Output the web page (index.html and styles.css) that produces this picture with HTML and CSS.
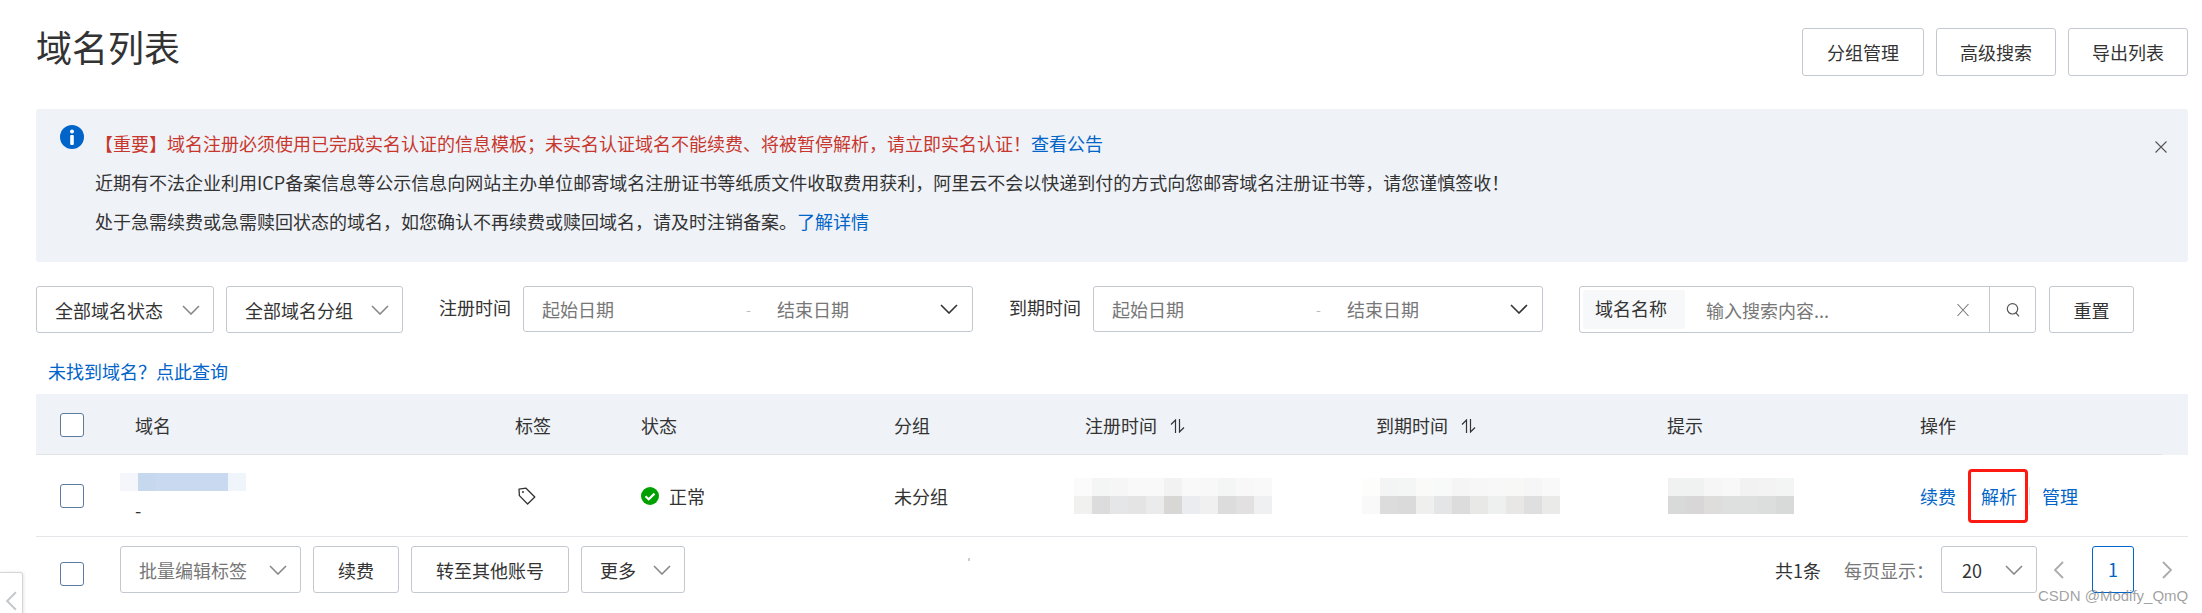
FILE: index.html
```html
<!DOCTYPE html>
<html lang="zh-CN">
<head>
<meta charset="utf-8">
<title>域名列表</title>
<link rel="stylesheet" href="styles.css">
</head>
<body>
<svg class="sprite" aria-hidden="true">
  <symbol id="chev" viewBox="0 0 18 10"><path d="M1 1l8 8 8-8" fill="none" stroke="currentColor" stroke-width="1.6"/></symbol>
  <symbol id="pageleft" viewBox="0 0 10 18"><path d="M9 1L1 9l8 8" fill="none" stroke="currentColor" stroke-width="1.8"/></symbol>
  <symbol id="pageright" viewBox="0 0 10 18"><path d="M1 1l8 8-8 8" fill="none" stroke="currentColor" stroke-width="1.8"/></symbol>
  <symbol id="sort" viewBox="0 0 15 14"><path d="M5.5 14V1L1 5.5M9.5 0v13L14 8.5" fill="none" stroke="currentColor" stroke-width="1.2"/></symbol>
</svg>
<div class="page">
  <header class="top">
    <h1 class="title">域名列表</h1>
    <div class="actions">
      <button class="btn btn-a">分组管理</button>
      <button class="btn btn-b">高级搜索</button>
      <button class="btn btn-c">导出列表</button>
    </div>
  </header>

  <section class="alert">
    <svg class="alert-icon" viewBox="0 0 24 24"><circle cx="12" cy="12" r="12" fill="#0064c8"/><circle cx="12" cy="6.6" r="2" fill="#fff"/><rect x="10.2" y="10" width="3.6" height="10" rx="1" fill="#fff"/></svg>
    <div class="alert-body">
      <p class="warn">【重要】域名注册必须使用已完成实名认证的信息模板；未实名认证域名不能续费、将被暂停解析，请立即实名认证！<a class="link">查看公告</a></p>
      <p>近期有不法企业利用ICP备案信息等公示信息向网站主办单位邮寄域名注册证书等纸质文件收取费用获利，阿里云不会以快递到付的方式向您邮寄域名注册证书等，请您谨慎签收！</p>
      <p>处于急需续费或急需赎回状态的域名，如您确认不再续费或赎回域名，请及时注销备案。<a class="link">了解详情</a></p>
    </div>
    <svg class="alert-close" viewBox="0 0 14 14"><path d="M1.5 1.5l11 11M12.5 1.5l-11 11" stroke="#555" stroke-width="1.1" fill="none"/></svg>
  </section>

  <section class="filters">
    <div class="select sel-status"><span>全部域名状态</span><svg class="chev"><use href="#chev"/></svg></div>
    <div class="select sel-group"><span>全部域名分组</span><svg class="chev"><use href="#chev"/></svg></div>
    <label class="flabel flabel-reg">注册时间</label>
    <div class="range">
      <span class="ph ph-start">起始日期</span><span class="dash">-</span><span class="ph">结束日期</span>
      <svg class="chev chev-dark"><use href="#chev"/></svg>
    </div>
    <label class="flabel flabel-exp">到期时间</label>
    <div class="range">
      <span class="ph ph-start">起始日期</span><span class="dash">-</span><span class="ph">结束日期</span>
      <svg class="chev chev-dark"><use href="#chev"/></svg>
    </div>
    <div class="search">
      <span class="search-prefix">域名名称</span>
      <span class="ph search-input">输入搜索内容...</span>
      <svg class="search-clear" viewBox="0 0 14 14"><path d="M1.5 1l11 12M12.5 1l-11 12" stroke="#777" stroke-width="1.1" fill="none"/></svg>
      <span class="search-btn"><svg viewBox="0 0 14 16" class="search-glass"><circle cx="6.5" cy="6.8" r="5.2" fill="none" stroke="#555" stroke-width="1.2"/><path d="M10 10.8l3 3.6" stroke="#555" stroke-width="1.2"/></svg></span>
    </div>
    <button class="btn btn-reset">重置</button>
  </section>

  <a class="link find">未找到域名？点此查询</a>

  <div class="trow thead">
    <span class="check"></span>
    <span class="pad">域名</span>
    <span>标签</span>
    <span>状态</span>
    <span>分组</span>
    <span class="sortable">注册时间<svg class="sort"><use href="#sort"/></svg></span>
    <span class="sortable">到期时间<svg class="sort"><use href="#sort"/></svg></span>
    <span>提示</span>
    <span>操作</span>
  </div>

  <div class="trow tbody">
    <span class="check"></span>
    <div class="name-cell">
      <span class="mosaic-name"></span>
      <span class="pad minus">-</span>
    </div>
    <svg class="tag" viewBox="0 0 18 18"><path d="M1 2.2L8 1.2 16.8 10 9.6 17 1.4 8.6z" fill="none" stroke="#333" stroke-width="1.3" stroke-linejoin="round"/><circle cx="5" cy="5" r="1" fill="#333"/></svg>
    <span class="status"><svg class="ok" viewBox="0 0 18 18"><circle cx="9" cy="9" r="9" fill="#00a000"/><path d="M4.5 9.2l3.2 3 5.8-5.6" fill="none" stroke="#fff" stroke-width="2.2"/></svg>正常</span>
    <span>未分组</span>
    <span class="mosaic mosaic-reg"></span>
    <span class="mosaic mosaic-exp"></span>
    <span class="mosaic mosaic-tip"></span>
    <span class="ops"><a class="link">续费</a><a class="link marked">解析</a><a class="link">管理</a></span>
  </div>

  <footer class="tfoot">
    <span class="check"></span>
    <div class="select sel-batch"><span>批量编辑标签</span><svg class="chev"><use href="#chev"/></svg></div>
    <button class="btn btn-renew">续费</button>
    <button class="btn btn-transfer">转至其他账号</button>
    <div class="select sel-more"><span>更多</span><svg class="chev"><use href="#chev"/></svg></div>
    <div class="pager">
      <span class="total">共1条</span>
      <span class="per">每页显示：</span>
      <div class="select sel-size"><span>20</span><svg class="chev"><use href="#chev"/></svg></div>
      <svg class="page-arrow"><use href="#pageleft"/></svg>
      <span class="page-cur">1</span>
      <svg class="page-arrow"><use href="#pageright"/></svg>
    </div>
  </footer>
</div>
<span class="speck"></span>
<div class="side-tab"><svg class="page-arrow"><use href="#pageleft"/></svg></div>
<div class="watermark">CSDN @Modify_QmQ</div>
</body>
</html>
```

FILE: styles.css
```css
* { box-sizing: border-box; }
html, body { margin: 0; padding: 0; background: #fff; }
body {
  position: relative;
  width: 2202px;
  height: 613px;
  overflow: hidden;
  font: 400 18px/24px "Noto Sans CJK SC", "Liberation Sans", sans-serif;
  color: #333;
}
.sprite { position: absolute; width: 0; height: 0; }
.page { padding: 22px 14px 0 36px; }
.link { color: #0064c8; text-decoration: none; }

.top { display: flex; justify-content: space-between; align-items: flex-start; height: 87px; }
.title { margin: 0; font-size: 36px; line-height: 48px; font-weight: 400; color: #333; }
.actions { display: flex; gap: 12px; margin-top: 6px; }
.btn {
  height: 48px;
  padding: 0;
  border: 1px solid #c4c8d0;
  border-radius: 3px;
  background: #fff;
  font: inherit;
  color: #333;
}
.btn-a { width: 122px; }
.btn-b { width: 120px; }
.btn-c { width: 120px; }

.alert {
  display: flex;
  height: 153px;
  background: #eff2f7;
  border-radius: 3px;
}
.alert-icon { width: 24px; height: 24px; margin: 16px 11px 0 24px; flex: none; }
.alert-body { flex: 1; padding-top: 15px; }
.alert-body p { margin: 0; line-height: 39px; height: 39px; white-space: nowrap; }
.warn { color: #c8372d; }
.alert-close { width: 14px; height: 14px; margin: 31px 20px 0 0; flex: none; }

.filters { display: flex; align-items: flex-start; margin-top: 24px; height: 47px; }
.select {
  display: flex;
  align-items: center;
  justify-content: space-between;
  height: 47px;
  border: 1px solid #c4c8d0;
  border-radius: 3px;
  background: #fff;
  padding: 0 13px 0 18px;
}
.chev { width: 18px; height: 10px; color: #888; flex: none; }
.chev-dark { color: #333; }
.sel-status { width: 178px; }
.sel-group { width: 177px; margin-left: 12px; }
.flabel { line-height: 42px; }
.flabel-reg { margin: 0 12px 0 36px; }
.flabel-exp { margin: 0 12px 0 36px; }
.range {
  display: flex;
  align-items: center;
  width: 450px;
  height: 46px;
  padding: 0 14px 0 18px;
  border: 1px solid #c4c8d0;
  border-radius: 3px;
}
.ph { color: #777; }
.ph-start { width: 204px; }
.dash { width: 31px; color: #bbb; font-size: 14px; }
.range .chev { margin-left: auto; }
.search {
  display: flex;
  align-items: center;
  width: 457px;
  height: 47px;
  margin-left: 36px;
  padding-left: 3px;
  border: 1px solid #c4c8d0;
  border-radius: 3px;
}
.search-prefix {
  width: 102px;
  height: 39px;
  line-height: 37px;
  padding-left: 12px;
  background: #f7f8fa;
  border-radius: 3px;
  flex: none;
}
.search-input { margin-left: 21px; flex: 1; }
.search-clear { width: 14px; height: 14px; margin-right: 19px; flex: none; }
.search-btn {
  display: flex;
  align-items: center;
  justify-content: center;
  width: 46px;
  height: 100%;
  border-left: 1px solid #c4c8d0;
  flex: none;
}
.search-glass { width: 14px; height: 16px; }
.btn-reset { width: 85px; height: 47px; margin-left: 13px; }

.find { display: block; margin: 26px 0 11px 12px; height: 24px; line-height: 24px; }

.trow {
  display: grid;
  grid-template-columns: 84px 395px 126px 253px 191px 291px 291px 253px 1fr;
  align-items: center;
}
.thead { position: relative; height: 61px; background: #eff2f7; }
.thead::after {
  content: "";
  position: absolute;
  left: 0;
  right: 26px;
  bottom: 0;
  height: 1px;
  background: #e0e3e8;
}
.tbody { height: 82px; border-bottom: 1px solid #e4e6ea; }
.check {
  display: block;
  width: 24px;
  height: 24px;
  margin-left: 24px;
  border: 1px solid #5b7ba0;
  border-radius: 3px;
  background: #fff;
}
.pad { padding-left: 15px; }
.sortable { display: flex; align-items: center; }
.sort { width: 15px; height: 14px; margin-left: 13px; margin-top: 3px; color: #333; }
.name-cell { display: flex; flex-direction: column; align-self: start; margin-top: 18px; }
.mosaic-name {
  display: block;
  width: 126px;
  height: 18px;
  background: linear-gradient(to right, #f4f6fb 0 18px, #c6d8ee 18px 36px, #c9daf0 36px 108px, #f0f4fb 108px 126px);
}
.minus { margin-top: 7px; line-height: 24px; }
.tag { width: 18px; height: 18px; margin-left: 3px; }
.status { display: flex; align-items: center; }
.ok { width: 18px; height: 18px; margin-right: 10px; }

.mosaic { display: block; height: 36px; background-repeat: no-repeat; background-size: 100% 18px; background-position: 0 0, 0 18px; }
.mosaic-reg {
  width: 198px;
  margin-left: -11px;
  background-image:
    linear-gradient(to right, #fbfbfb 0 18px, #f4f5f5 18px 36px, #f6f6f6 36px 54px, #f9f9f9 54px 90px, #f2f2f2 90px 108px, #f9f9f9 108px 126px, #f8f8f8 126px 144px, #f4f5f5 144px 162px, #f8f8f8 162px 180px, #f9f9f9 180px 198px),
    linear-gradient(to right, #f1f1f0 0 18px, #dcdcdc 18px 36px, #e4e6e8 36px 54px, #e4e4e4 54px 72px, #ebebeb 72px 90px, #d8d7d6 90px 108px, #ebecf0 108px 126px, #f0f0f0 126px 144px, #dcdcdc 144px 162px, #e2e0e0 162px 180px, #eef0f2 180px 198px);
}
.mosaic-exp {
  width: 198px;
  margin-left: -14px;
  background-image:
    linear-gradient(to right, #fdfdfc 0 18px, #f3f5f5 18px 36px, #f4f5f5 36px 54px, #fafaf8 54px 72px, #f8faf9 72px 90px, #f5f5f5 90px 108px, #f7f7f7 108px 126px, #f8f8f8 126px 144px, #f8f8f7 144px 162px, #f6f6f6 162px 180px, #f9f9f9 180px 198px),
    linear-gradient(to right, #f9f9f9 0 18px, #dcdcdc 18px 36px, #dadada 36px 54px, #efefed 54px 72px, #e3e5e7 72px 90px, #dcdcdc 90px 108px, #e8e8e6 108px 126px, #eef0f0 126px 144px, #e9e7e6 144px 162px, #dfdfdf 162px 180px, #eaeae8 180px 198px);
}
.mosaic-tip {
  width: 126px;
  margin-left: 1px;
  background-image:
    linear-gradient(to right, #f0f1f1 0 36px, #f6f6f6 36px 54px, #f8f8f8 54px 72px, #f2f2f3 72px 90px, #f3f3f4 90px 108px, #f3f5f4 108px 126px),
    linear-gradient(to right, #d8dada 0 18px, #d8d6d6 18px 36px, #dfdddc 36px 54px, #dedfdf 54px 90px, #dcdddd 90px 108px, #d8dada 108px 126px);
}
.ops { display: flex; gap: 25px; }
.marked { position: relative; }
.marked::after {
  content: "";
  position: absolute;
  top: -15px;
  bottom: -15px;
  left: -13px;
  right: -11px;
  border: 3px solid #fe1a10;
  border-radius: 4px;
}
.marked::before {
  content: "";
  position: absolute;
  top: 3px;
  bottom: 3px;
  right: -13px;
  width: 1px;
  background: #dfe1e5;
}

.tfoot { display: flex; align-items: flex-start; padding-top: 9px; }
.tfoot .check { margin-top: 16px; }
.sel-batch { width: 181px; margin-left: 36px; color: #777; }
.btn-renew { width: 86px; height: 47px; margin-left: 12px; }
.btn-transfer { width: 158px; height: 47px; margin-left: 12px; }
.sel-more { width: 104px; margin-left: 12px; }
.pager { display: flex; align-items: center; margin-left: auto; height: 47px; }
.total { margin-right: 23px; }
.per { width: 97px; color: #777; }
.sel-size { width: 96px; padding: 0 13px 0 20px; }
.page-arrow { width: 10px; height: 18px; color: #aaa; flex: none; }
.pager > .page-arrow:nth-of-type(1) { margin: 0 28px 0 17px; }
.pager > .page-arrow:nth-of-type(2) { margin: 0 16px 0 28px; }
.page-cur {
  width: 42px;
  height: 47px;
  line-height: 45px;
  text-align: center;
  border: 1px solid #0064c8;
  border-radius: 3px;
  color: #0064c8;
}

.speck { position: absolute; left: 968px; top: 558px; width: 2px; height: 3px; background: #ccc; }
.side-tab {
  position: absolute;
  left: -1px;
  top: 572px;
  width: 24px;
  height: 50px;
  padding: 18px 0 0 6px;
  border: 1px solid #d4d6da;
  border-radius: 0 3px 0 0;
  box-shadow: 1px 0 3px rgba(0, 0, 0, .1);
  background: #fff;
}
.side-tab .page-arrow { width: 11px; height: 20px; color: #c4c8cc; }
.watermark {
  position: absolute;
  left: 2038px;
  top: 586px;
  font: 400 15px/20px "Liberation Sans", sans-serif;
  color: rgba(120, 120, 120, .7);
  white-space: nowrap;
}
```
